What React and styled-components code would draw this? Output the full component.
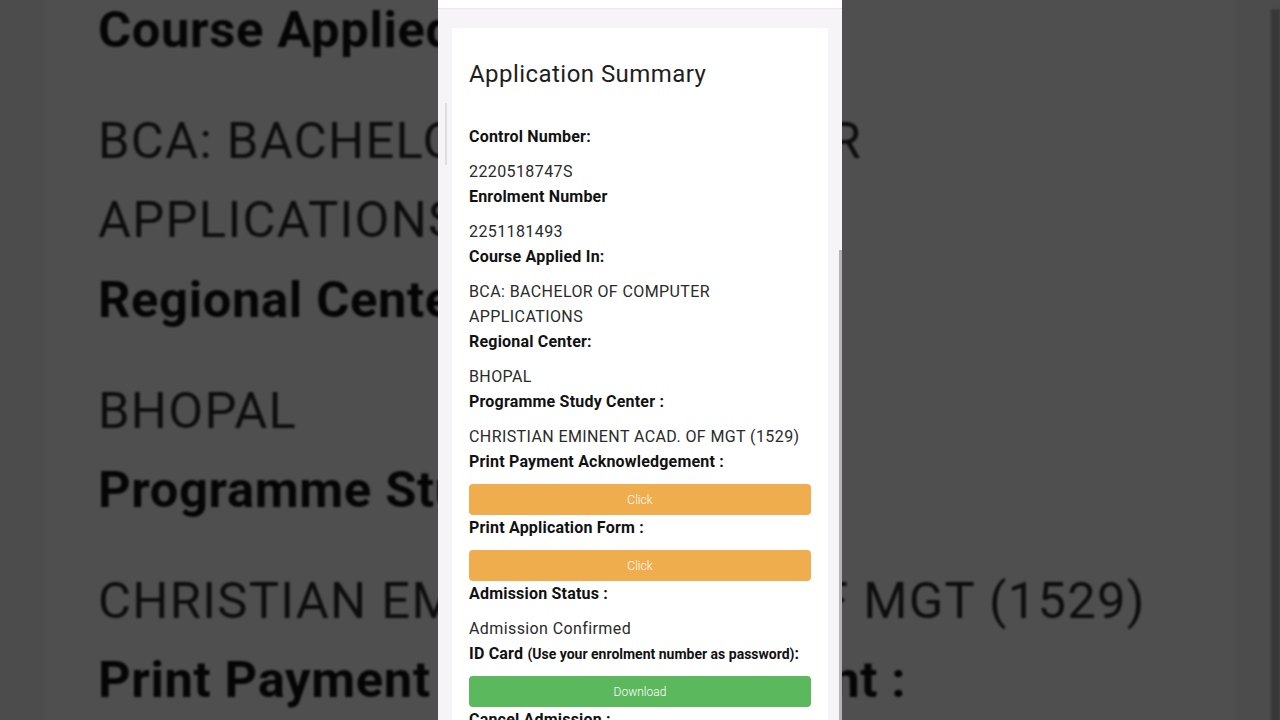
import styled, { createGlobalStyle } from "styled-components"

const GlobalStyle = createGlobalStyle`
    html, body {
        margin: 0;
        padding: 0;
        background: #4e4e4e;
        overflow: hidden;
    }

    * {
        box-sizing: border-box;
    }
`

const fields = [
    { label: "Control Number:", value: ["2220518747S"] },
    { label: "Enrolment Number", value: ["2251181493"] },
    { label: "Course Applied In:", value: ["BCA: BACHELOR OF COMPUTER", "APPLICATIONS"] },
    { label: "Regional Center:", value: ["BHOPAL"] },
    { label: "Programme Study Center :", value: ["CHRISTIAN EMINENT ACAD. OF MGT (1529)"] },
    { label: "Print Payment Acknowledgement :", button: "Click", tone: "warning" },
    { label: "Print Application Form :", button: "Click", tone: "warning" },
    { label: "Admission Status :", value: ["Admission Confirmed"] },
    { label: "ID Card", hint: "(Use your enrolment number as password)", button: "Download", tone: "success" },
    { label: "Cancel Admission :" },
]

function Screen() {
    return (
        <Phone>
            <TopBar />
            <Body>
                <Card>
                    <Title>Application Summary</Title>
                    {fields.map((f) => (
                        <Field key={f.label}>
                            <Label>
                                {f.label}
                                {f.hint && (
                                    <>
                                        {" "}<Hint>{f.hint}</Hint>:
                                    </>
                                )}
                            </Label>
                            {f.value && f.value.map((line) => <Value key={line}>{line}</Value>)}
                            {f.button && <Button $tone={f.tone}>{f.button}</Button>}
                        </Field>
                    ))}
                </Card>
            </Body>
            <SideTrack />
            <ScrollThumb />
        </Phone>
    )
}

export default function App() {
    return (
        <>
            <GlobalStyle />
            <Stage>
                {/* blown-up, dimmed copy of the screen behind it */}
                <Backdrop aria-hidden="true">
                    <Zoomed>
                        <Screen />
                    </Zoomed>
                </Backdrop>
                <Front>
                    <Screen />
                </Front>
            </Stage>
        </>
    )
}

const Stage = styled.div`
    position: relative;
    width: 1280px;
    height: 720px;
    overflow: hidden;
    display: flex;
    justify-content: center;
    background: #4e4e4e;
`

const Backdrop = styled.div`
    position: absolute;
    inset: 0;
    display: flex;
    justify-content: center;
    filter: brightness(0.31) blur(0.8px);
`

const Zoomed = styled.div`
    transform: scale(3.17);
    transform-origin: 50% 361px;
`

const Front = styled.div`
    position: relative;
    z-index: 1;
`

const Phone = styled.div`
    position: relative;
    width: 404px;
    height: 720px;
    overflow: hidden;
    background: #f6f4f7;
    font-family: Roboto, "Noto Sans", sans-serif;
`

const TopBar = styled.div`
    height: 9px;
    background: #ffffff;
    border-bottom: 1px solid #ebe9ec;
`

const Body = styled.div`
    padding: 19px 14px 0 14px;
`

const Card = styled.div`
    background: #ffffff;
    padding: 31px 17px 40px 17px;
`

const Title = styled.h3`
    margin: 0 0 35px 0;
    font-size: 24px;
    line-height: 30px;
    font-weight: 400;
    color: #1e1e1e;
    letter-spacing: 0.45px;
`

const Field = styled.div`
    display: flex;
    flex-direction: column;
`

const Label = styled.div`
    height: 25px;
    font-size: 16px;
    line-height: 25px;
    font-weight: 700;
    color: #111111;
    margin-bottom: 10px;
    letter-spacing: 0.2px;
    white-space: nowrap;
`

const Hint = styled.span`
    font-size: 14px;
    line-height: 1;
    letter-spacing: 0;
`

const Value = styled.div`
    font-size: 16px;
    line-height: 25px;
    font-weight: 400;
    color: #2a2a2a;
    letter-spacing: 0.4px;
`

const Button = styled.div`
    height: 31px;
    border-radius: 4px;
    background: ${(p) => (p.$tone === "success" ? "#5cb85c" : "#f0ad4e")};
    color: #ffffff;
    font-size: 12px;
    font-weight: 300;
    display: flex;
    align-items: center;
    justify-content: center;
`

const SideTrack = styled.div`
    position: absolute;
    left: 7px;
    top: 103px;
    width: 2px;
    height: 62px;
    background: #dedede;
`

const ScrollThumb = styled.div`
    position: absolute;
    right: 0;
    top: 250px;
    width: 3px;
    height: 470px;
    background: #b4b4b4;
`
